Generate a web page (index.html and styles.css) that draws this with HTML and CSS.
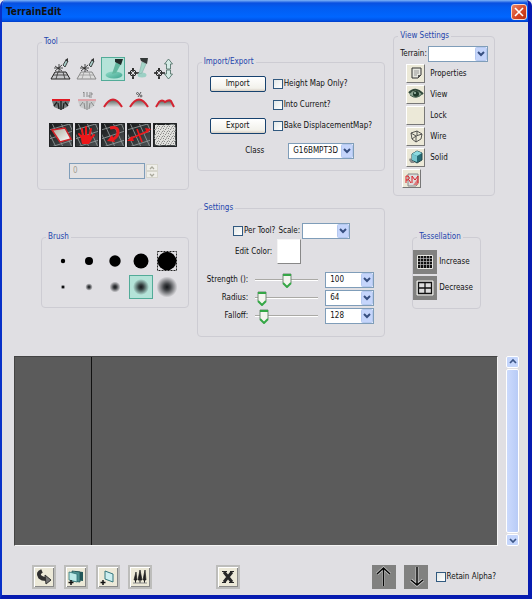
FILE: index.html
```html
<!DOCTYPE html>
<html lang="en">
<head>
<meta charset="utf-8">
<title>TerrainEdit</title>
<link rel="stylesheet" href="styles.css">
</head>
<body>
<svg class="defs" aria-hidden="true">
  <defs>
    <radialGradient id="soft"><stop offset="0" stop-color="#15181b"/><stop offset=".3" stop-color="#15181b" stop-opacity=".8"/><stop offset="1" stop-color="#15181b" stop-opacity="0"/></radialGradient>
    <linearGradient id="teal" x1="0" y1="0" x2="1" y2="1"><stop offset="0" stop-color="#8fdcc8"/><stop offset="1" stop-color="#3fa48f"/></linearGradient>
    <linearGradient id="hill" x1="0" y1="0" x2="0" y2="1"><stop offset="0" stop-color="#555f58"/><stop offset="1" stop-color="#dcdde0"/></linearGradient>
    <linearGradient id="pane" x1="0" y1="0" x2="1" y2="1"><stop offset="0" stop-color="#aaa89a"/><stop offset="1" stop-color="#fff"/></linearGradient>
    <linearGradient id="floor" x1="0" y1="0" x2="1" y2="1"><stop offset="0" stop-color="#151617"/><stop offset="1" stop-color="#505557"/></linearGradient>
    <pattern id="noise" width="5" height="5" patternUnits="userSpaceOnUse"><rect width="5" height="5" fill="#e0e0dd"/><path d="M0 0h1v1H0zM2 1h1v1H2zM4 3h1v1H4zM1 3h1v1H1z" fill="#888"/><path d="M3 0h1v1H3zM0 2h1v1H0zM3 4h1v1H3z" fill="#b3b3b0"/></pattern>
    <g id="tiles"><rect width="24" height="24" fill="url(#floor)"/><path d="M0 7L24 0M0 16L24 8M2 24L24 17M3 0L14 24M12 0L23 24M0 10L7 24M20 0L24 9" stroke="#8f9596" stroke-width=".9" fill="none"/><path d="M.5 .5h23v23H.5z" stroke="#202224" fill="none"/></g>
    <g id="spray"><path d="M14 8l3-5 2 1-3 6z" fill="#a9ceca" stroke="#404443"/><path d="M16 3l3-2v4z" fill="#333"/><path d="M6 9l7 5M10 7v8M13 8l-7 6M5 11h9" stroke="#222" stroke-width=".8"/></g>
    <g id="cross"><circle cx="6" cy="16" r="3" fill="none" stroke="#222"/><path d="M6 11v4M6 17v5M1 16h4M7 16h5M5 12h2M5 21h2" stroke="#222" stroke-width="1.3"/></g>
  </defs>
</svg>
<main class="window">
  <header class="titlebar">
    <h1>TerrainEdit</h1>
    <button class="close" aria-label="Close"><svg viewBox="0 0 10 10" width="10" height="10"><path d="M1 1l8 8M9 1L1 9" stroke="#fff" stroke-width="1.6"/></svg></button>
  </header>

  <div class="panels">
    <div class="column column-left">
      <fieldset class="tool">
        <legend>Tool</legend>
        <div class="tool-grid">
          <button aria-label="Paint"><svg viewBox="0 0 24 24"><path d="M6 15h11l4 7H2z" fill="#c8c9cc" stroke="#222"/><path d="M4 18h15M9 15l-2 7M14 15l2 7" stroke="#333" stroke-width=".8"/><use href="#spray"/></svg></button>
          <button aria-label="Paint height"><svg viewBox="0 0 24 24"><path d="M6 15h11l4 7H2z" fill="#ddd" stroke="#888"/><path d="M4 18h15M9 15l-2 7M14 15l2 7" stroke="#999" stroke-width=".8"/><use href="#spray"/></svg></button>
          <button class="selected" aria-label="Smooth"><svg viewBox="0 0 24 24"><ellipse cx="13" cy="18" rx="8.500" ry="3.500" fill="url(#teal)"/><path d="M15 5l5 2-5 9-4 1z" fill="#62b79f"/><path d="M14 2h8l-2 6-6-3z" fill="#222c2a"/></svg></button>
          <button aria-label="Position smooth"><svg viewBox="0 0 24 24"><use href="#cross"/><ellipse cx="15" cy="18" rx="4.500" ry="2.500" fill="#9cd0c5"/><path d="M15 5l4 2-4 9-3 1z" fill="#a4d4c8" stroke="#88b5aa" stroke-width=".7"/><path d="M13 1h8l-1 6-6-3z" fill="#333838"/></svg></button>
          <button aria-label="Raise and lower"><svg viewBox="0 0 24 24"><use href="#cross"/><path d="M15.500 2l4 5h-2v5h-4V7h-2zM13.500 13h4v4h2l-4 5-4-5h2z" fill="#d5ebe6" stroke="#46685e" stroke-width=".8"/></svg></button>

          <button aria-label="Flatten"><svg viewBox="0 0 24 24"><path d="M3 11h18l-3 6-6 3-7-3z" fill="#74797a"/><path d="M12 11v9M8 12l-3 4M16 12l3 4M9 13l1 6M15 13l-1 6" stroke="#1d1f1e" stroke-width="1.300"/><path d="M3 10h18" stroke="#e01822" stroke-width="2"/></svg></button>
          <button aria-label="Flatten to height"><svg viewBox="0 0 24 24"><path d="M3 11h18l-3 6-6 3-7-3z" fill="#c8cacb"/><path d="M12 11v9M8 12l-3 4M16 12l3 4M9 13l1 6M15 13l-1 6" stroke="#888"/><path d="M3 10h18" stroke="#df6870"/><path d="M8 3l1-1v5M12 2v5M14 3h3v2h-3v2h3" fill="none" stroke="#777" stroke-width=".8"/></svg></button>
          <button aria-label="Hill"><svg viewBox="0 0 24 24"><path d="M3 17q9-15 18 0z" fill="url(#hill)"/><path d="M3 17q9-15 18 0" fill="none" stroke="#d42331" stroke-width="2"/></svg></button>
          <button aria-label="Hill percent"><svg viewBox="0 0 24 24"><path d="M3 17q9-15 18 0z" fill="url(#hill)"/><path d="M3 17q9-15 18 0" fill="none" stroke="#d42331" stroke-width="2"/><circle cx="10.500" cy="3.500" r="1" fill="none" stroke="#333" stroke-width=".7"/><circle cx="14" cy="6" r="1" fill="none" stroke="#333" stroke-width=".7"/><path d="M14 2l-3 5" stroke="#333" stroke-width=".8"/></svg></button>
          <button aria-label="Noise"><svg viewBox="0 0 24 24"><path d="M3 17l4-6q3-1 5 1 3-2 6-1l3 6z" fill="url(#hill)"/><path d="M3 17l3-5q3-3 6 0 4-3 6-1l3 6" fill="none" stroke="#d42331" stroke-width="2"/></svg></button>

          <button aria-label="Visibility"><svg viewBox="0 0 24 24"><use href="#tiles"/><path d="M3 7l13-2 6 11-11 3z" fill="url(#pane)" stroke="#d32128" stroke-width="1.500"/></svg></button>
          <button aria-label="Grab"><svg viewBox="0 0 24 24"><use href="#tiles"/><path d="M8 20l-1-5-3-4M8 14L7 6M11 13V4M14 14l2-8M15 16l4-4" fill="none" stroke="#ed1719" stroke-width="2" stroke-linecap="round"/><path d="M6 12h9l2 4-3 5H7z" fill="#ed1719"/></svg></button>
          <button aria-label="Rotate"><svg viewBox="0 0 24 24"><use href="#tiles"/><path d="M9 5q8-2 8 4 0 5-6 8" fill="none" stroke="#e81b1e" stroke-width="3"/><path d="M6 18l5-6 3 7z" fill="#ee191c"/></svg></button>
          <button aria-label="Stretch"><svg viewBox="0 0 24 24"><use href="#tiles"/><path d="M3 16L21 8M10 6l5 13" stroke="#ec171a" stroke-width="1.700"/><path d="M0 18l5-5 2 5zM24 6l-6-1 2 5z" fill="#ec171a"/></svg></button>
          <button aria-label="Texture"><svg viewBox="0 0 24 24"><use href="#tiles"/><path d="M2 2h20v20H2z" fill="url(#noise)"/></svg></button>
        </div>
        <div class="spinner">
          <input type="text" value="0" aria-label="Tool value" disabled>
          <span class="spin-buttons">
            <button aria-label="Increase value" disabled><svg viewBox="0 0 6 4"><path d="M1 3l2-2 2 2" fill="none" stroke="#aaa99c" stroke-width="1.300"/></svg></button>
            <button aria-label="Decrease value" disabled><svg viewBox="0 0 6 4"><path d="M1 1l2 2 2-2" fill="none" stroke="#aaa99c" stroke-width="1.300"/></svg></button>
          </span>
        </div>
      </fieldset>

      <fieldset class="brush">
        <legend>Brush</legend>
        <div class="brush-grid">
          <button aria-label="Hard brush 1"><svg viewBox="0 0 24 24"><circle cx="12" cy="12" r="2.200"/></svg></button>
          <button aria-label="Hard brush 2"><svg viewBox="0 0 24 24"><circle cx="12" cy="12" r="4"/></svg></button>
          <button aria-label="Hard brush 3"><svg viewBox="0 0 24 24"><circle cx="12" cy="12" r="5.700"/></svg></button>
          <button aria-label="Hard brush 4"><svg viewBox="0 0 24 24"><circle cx="12" cy="12" r="7.500"/></svg></button>
          <button aria-label="Hard brush 5"><svg viewBox="0 0 24 24"><path d="M2.500 2.500h19v19h-19z" fill="none" stroke="#222" stroke-dasharray="2 1"/><circle cx="12" cy="12" r="9.300"/></svg></button>
          <button aria-label="Soft brush 1"><svg viewBox="0 0 24 24"><circle cx="12" cy="12" r="2.500" fill="url(#soft)"/><circle cx="12" cy="12" r="1"/></svg></button>
          <button aria-label="Soft brush 2"><svg viewBox="0 0 24 24"><circle cx="12" cy="12" r="3.700" fill="url(#soft)"/></svg></button>
          <button aria-label="Soft brush 3"><svg viewBox="0 0 24 24"><circle cx="12" cy="12" r="5.500" fill="url(#soft)"/></svg></button>
          <button class="selected" aria-label="Soft brush 4"><svg viewBox="0 0 24 24"><circle cx="12" cy="12" r="8" fill="url(#soft)"/></svg></button>
          <button aria-label="Soft brush 5"><svg viewBox="0 0 24 24"><circle cx="12" cy="12" r="10.500" fill="url(#soft)"/></svg></button>
        </div>
      </fieldset>
    </div>

    <div class="column column-middle">
      <fieldset class="import-export">
        <legend>Import/Export</legend>
        <div class="ie-grid">
          <button class="push">Import</button>
          <label class="check"><input type="checkbox">Height Map Only?</label>
          <label class="check second"><input type="checkbox">Into Current?</label>
          <button class="push">Export</button>
          <label class="check"><input type="checkbox">Bake DisplacementMap?</label>
        </div>
        <div class="class-row">
          <label for="class">Class</label>
          <select id="class"><option>G16BMPT3D</option></select>
        </div>
      </fieldset>

      <fieldset class="settings">
        <legend>Settings</legend>
        <div class="scale-row">
          <label class="check"><input type="checkbox">Per Tool?</label>
          <label for="scale">Scale:</label>
          <select id="scale"><option></option></select>
        </div>
        <div class="color-row">
          <label for="color">Edit Color:</label>
          <button id="color" class="swatch"></button>
        </div>
        <div class="slider-grid">
          <label for="strength">Strength ():</label>
          <input id="strength" type="range" min="0" max="200" value="100">
          <select aria-label="Strength value"><option>100</option></select>
          <label for="radius">Radius:</label>
          <input id="radius" type="range" min="0" max="2048" value="64">
          <select aria-label="Radius value"><option>64</option></select>
          <label for="falloff">Falloff:</label>
          <input id="falloff" type="range" min="0" max="2048" value="128">
          <select aria-label="Falloff value"><option>128</option></select>
        </div>
      </fieldset>
    </div>

    <div class="column column-right">
      <fieldset class="view">
        <legend>View Settings</legend>
        <div class="terrain-row">
          <label for="terrain">Terrain:</label>
          <select id="terrain"><option></option></select>
        </div>
        <div class="view-list">
          <button id="v1" class="raised"><svg viewBox="0 0 16 16"><path d="M4 3h9v7l-3 3H4z" fill="#e6e6df" stroke="#333"/><path d="M6 6h5M6 8h5M6 10h3" stroke="#999"/><path d="M13 10h-3v3z" fill="#555"/></svg></button><label for="v1">Properties</label>
          <button id="v2" class="raised"><svg viewBox="0 0 16 16"><path d="M1 8q6-7 14 0-7 7-14 0z" fill="#8da493"/><path d="M1 7q6-7 14 1" fill="none" stroke="#30483a" stroke-width="2"/><circle cx="8" cy="8" r="3" fill="#203a2c"/><circle cx="7" cy="7" r="1" fill="#aac6b4"/><path d="M2 9q6 5 12-1" fill="none" stroke="#4a6555"/></svg></button><label for="v2">View</label>
          <button id="v3" class="raised"></button><label for="v3">Lock</label>
          <button id="v4" class="raised"><svg viewBox="0 0 16 16"><path d="M3 5l6-2 5 3-1 5-5 3-4-3zM3 5l5 3 6-2M8 8v6M9 3v4M4 11l4-3" fill="none" stroke="#444" stroke-width=".9"/></svg></button><label for="v4">Wire</label>
          <button id="v5" class="raised"><svg viewBox="0 0 16 16"><path d="M2 9l5 5H3l-2-3z" fill="#888"/><path d="M4 5l5-3 5 2v7l-5 3-5-3z" fill="#276b74" stroke="#274a50"/><path d="M4 5l5-3 5 2-5 3z" fill="#8edbe0"/><path d="M4 5l5 2v6l-5-2z" fill="#76c6ce"/></svg></button><label for="v5">Solid</label>
        </div>
        <button class="raised realtime" aria-label="Real-time preview"><svg viewBox="0 0 16 16"><path d="M4 3h10v10l-2 2H4z" fill="#ddd" stroke="#888"/><path d="M10 13l4-6v7H9z" fill="#d97a7c"/><path d="M2 12V5h2q3 2 0 4H2M5 9l2 3M8 12V5l3 4 3-4v7" fill="none" stroke="#db1d25"/></svg></button>
      </fieldset>

      <fieldset class="tessellation">
        <legend>Tessellation</legend>
        <div class="tess-list">
          <button id="t1" class="flat"><svg viewBox="0 0 24 24"><path d="M4.500 5.500h15v13h-15z" fill="#111" stroke="#e7e7e2"/><path d="M7.500 6v12M10.500 6v12M13.500 6v12M16.500 6v12M5 8.500h14M5 11.500h14M5 14.500h14" stroke="#bbb" stroke-width=".7"/></svg></button><label for="t1">Increase</label>
          <button id="t2" class="flat"><svg viewBox="0 0 24 24"><path d="M4 5h16v14H4z" fill="#ddd" stroke="#f0f0eb"/><path d="M5.500 6.500h13v11h-13zM12 6v12M5 12h14" fill="none" stroke="#111" stroke-width="1.300"/></svg></button><label for="t2">Decrease</label>
        </div>
      </fieldset>
    </div>
  </div>

  <div class="decks">
    <section class="canvas" aria-label="Deco layers"></section>
    <div class="scrollbar">
      <button aria-label="Scroll up"><svg viewBox="0 0 8 8"><path d="M1 5l3-3 3 3" fill="none" stroke="#3d5688" stroke-width="1.700"/></svg></button>
      <div class="thumb"></div>
      <button aria-label="Scroll down"><svg viewBox="0 0 8 8"><path d="M1 3l3 3 3-3" fill="none" stroke="#3d5688" stroke-width="1.700"/></svg></button>
    </div>
  </div>

  <footer class="toolbar">
    <button class="framed" aria-label="Convert"><svg viewBox="0 0 16 16"><path d="M6 2q-5 2-2 6 2 2 6 2" fill="none" stroke="#303030" stroke-width="4"/><path d="M9 6l6 5-5 4z" fill="#777" stroke="#333"/></svg></button>
    <button class="framed" aria-label="Add layers"><svg viewBox="0 0 16 16"><path d="M7 2l8 1v9l-8-1z" fill="#22585a"/><path d="M4 2l8 1v10l-8-1z" fill="#4f9290" stroke="#225456" stroke-width=".8"/><path d="M1 3l8 2v8l-8-2z" fill="#bceae7" stroke="#2e7276" stroke-width=".8"/><path d="M3 11v5M.500 13.500h5" stroke="#111" stroke-width="1.500"/></svg></button>
    <button class="framed" aria-label="Add layer"><svg viewBox="0 0 16 16"><path d="M5 2l8 3v8L5 10z" fill="#cceeef" stroke="#34777d"/><path d="M3 11v5M.500 13.500h5" stroke="#111" stroke-width="1.500"/></svg></button>
    <button class="framed" aria-label="Add decoration"><svg viewBox="0 0 16 16"><path d="M4 3l1 8H2zM8 1l2 10H6zM13 1l1 10h-3z" fill="#202020" stroke="#202020" stroke-width=".7"/><path d="M3.500 11v3M8 11v3M12.500 11v3" stroke="#222"/><path d="M1 14h14" stroke="#888"/></svg></button>
    <button class="framed delete" aria-label="Delete"><svg viewBox="0 0 16 16"><path d="M4 3l8 10M12 3L4 13" stroke="#272727" stroke-width="3"/><path d="M2 2.500h5M10 2.500h4M2 13.500h4M9 13.500h5" stroke="#272727"/></svg></button>
    <button class="flat move-up" aria-label="Move up"><svg viewBox="0 0 24 24"><path d="M11.500 21V3M5 9l6.500-6L18 9" fill="none" stroke="#ccc" stroke-width="3"/><path d="M11.500 21V3M5 9l6.500-6L18 9" fill="none" stroke="#050505" stroke-width="1.500"/></svg></button>
    <button class="flat" aria-label="Move down"><svg viewBox="0 0 24 24"><path d="M13 2v18M7 15l6 5 6-5" fill="none" stroke="#ccc" stroke-width="3"/><path d="M13 2v18M7 15l6 5 6-5" fill="none" stroke="#050505" stroke-width="1.500"/></svg></button>
    <label class="check"><input type="checkbox">Retain Alpha?</label>
  </footer>
</main>
</body>
</html>
```
FILE: styles.css
```css
* { box-sizing: border-box; }

body {
  margin: 0;
  background: #e9ebf4;
  color: #111;
  font: 8px/10px "DejaVu Sans Condensed", "DejaVu Sans", sans-serif;
}

button, input, select { font: inherit; color: inherit; margin: 0; padding: 0; }
button { border: 0; background: none; }
svg { display: block; }
fieldset { min-width: 0; margin: 0; padding: 0; border: 1px solid #cdccd3; border-radius: 4px; }
legend { margin-left: 4px; padding: 0 2px; color: #2345ad; line-height: 12px; }
.defs { position: absolute; width: 0; height: 0; }

.window {
  display: flex;
  flex-direction: column;
  min-height: 100vh;
  border: solid #0830c8;
  border-width: 0 4px 4px 2px;
  border-right-color: #061bb0;
  border-bottom-color: #061bb0;
  border-radius: 6px 6px 0 0;
  background: #e0dfe3;
  overflow: hidden;
}

.titlebar {
  display: flex;
  align-items: center;
  justify-content: space-between;
  height: 22px;
  padding: 2px 1px 0 4px;
  background: linear-gradient(#7eb4f8 0, #0950e0 3px, #025cf0 7px, #0066ff 17px, #0055ea 20px, #003cc8 22px);
}
.titlebar h1 { margin: 0; font-size: 10px; line-height: 14px; }
.close {
  display: grid;
  place-items: center;
  width: 16px;
  height: 16px;
  border: 1px solid #f4d7d0;
  border-radius: 3px;
  background: linear-gradient(135deg, #e98364, #d54422 60%, #b93010);
}

.panels {
  display: grid;
  grid-template-columns: 152fr 189fr 102fr;
  gap: 8px;
  padding: 8px 33px 0 35px;
}
.column { display: flex; flex-direction: column; }
.column-left { padding-top: 6px; gap: 41px; }
.column-middle { padding-top: 26px; gap: 31px; }
.column-right { gap: 35px; }
.brush { margin-left: 4px; }
.tessellation { margin: 0 14px 0 19px; }

/* Tool and brush palettes */
.tool-grid, .brush-grid { display: grid; grid-template-columns: repeat(5, 24px); justify-content: center; column-gap: 2px; }
.tool-grid { row-gap: 9px; padding-top: 9px; }
.brush-grid { row-gap: 2px; padding: 6px 0 8px; }
.tool-grid svg, .brush-grid svg { width: 100%; height: 100%; }
.tool-grid button, .brush-grid button { width: 24px; height: 24px; }
.selected { background: #b4e3d8; outline: 1px solid #52ab98; outline-offset: -1px; }
.spinner { display: flex; width: 90px; height: 16px; margin: 16px auto 10px 31px; }
.spinner input { flex: 1; min-width: 0; padding-left: 3px; border: 1px solid #7f9db9; background: #e3e2e4; color: #a39f92; }
.spin-buttons { display: grid; width: 14px; padding: 1px; }
.spin-buttons button { display: grid; place-items: center; border: 1px solid #d7d6cd; background: #efeee9; }
.spin-buttons svg { width: 6px; height: 4px; }

/* Shared controls */
.check { display: flex; align-items: center; gap: 1px; white-space: nowrap; }
.check input { appearance: none; width: 10px; height: 10px; border: 1px solid #31597f; background: linear-gradient(135deg, #e3e8e8, #fff); }
.push {
  height: 16px;
  border: 1px solid #17426f;
  border-radius: 2px;
  background: linear-gradient(#fff, #f2f1eb 80%, #d8d0c5);
}
select {
  appearance: none;
  height: 16px;
  padding: 0 14px 0 4px;
  border: 1px solid #7f9db9;
  border-radius: 0;
  background: #fff url("data:image/svg+xml,%3Csvg xmlns='http://www.w3.org/2000/svg' width='12' height='14'%3E%3Crect x='.5' y='.5' width='11' height='13' rx='1' fill='%23c5d5fb' stroke='%23b5c8ef'/%3E%3Cpath d='M3 5l3 3 3-3' fill='none' stroke='%23374f80' stroke-width='2'/%3E%3C/svg%3E") right center no-repeat;
}

.ie-grid {
  display: grid;
  grid-template-columns: 56px auto;
  grid-auto-rows: 16px;
  gap: 5px 7px;
  padding: 8px 8px 0 12px;
}
.second { grid-column: 2; }
.class-row { display: flex; align-items: center; justify-content: flex-end; gap: 24px; padding: 9px 30px 11px 0; }
.class-row select { width: 66px; }

.scale-row { display: flex; align-items: center; justify-content: flex-end; gap: 3px; padding: 9px 34px 0 0; }
.scale-row select { width: 48px; margin-left: -1px; }
.color-row { display: flex; align-items: center; justify-content: flex-end; gap: 5px; padding-right: 83px; }
.swatch { width: 24px; height: 25px; border: 1px solid; border-color: #f4f4f4 #888 #888 #f4f4f4; background: #fff; }
.slider-grid {
  display: grid;
  grid-template-columns: 1fr 63px 49px;
  align-items: center;
  gap: 2px 7px;
  padding: 8px 10px 12px 0;
}
.slider-grid label { text-align: right; white-space: nowrap; }
input[type="range"] {
  appearance: none;
  width: 100%;
  height: 16px;
  background: linear-gradient(#aaa9a5, #aaa9a5 1px, #fff 1px) center / 100% 2px no-repeat;
}
input[type="range"]::-webkit-slider-thumb {
  appearance: none;
  width: 10px;
  height: 15px;
  background: url("data:image/svg+xml,%3Csvg xmlns='http://www.w3.org/2000/svg' width='10' height='15'%3E%3Cpath d='M1 1h8v9l-4 4-4-4z' fill='%23f4f5ef' stroke='%23708a74'/%3E%3Cpath d='M1 2h8M1 10l4 4 4-4' fill='none' stroke='%2335a746' stroke-width='2'/%3E%3C/svg%3E");
}

.terrain-row { display: flex; align-items: center; gap: 1px; padding: 4px 6px 0; }
.terrain-row select { flex: 1; min-width: 0; }
.view-list { display: grid; grid-template-columns: 20px auto; grid-auto-rows: 20px; align-items: center; gap: 1px 4px; padding: 1px 0 0 12px; }
.view-list label { line-height: 12px; padding-top: 1px; }
.raised {
  display: grid;
  place-items: center;
  width: 19px;
  height: 19px;
  border: 1px solid;
  border-color: #fff #777 #777 #fff;
  background: #ece9d8;
}
.raised svg { width: 16px; height: 16px; }
.realtime { margin: 2px 0 7px 8px; }

.tess-list { display: grid; grid-template-columns: 24px auto; align-items: center; gap: 2px; padding: 7px 0 8px; }
.flat { width: 24px; height: 24px; background: #818180; }
.flat svg { width: 24px; height: 24px; }

/* Layer area */
.decks { display: flex; flex: 1; gap: 8px; margin-top: 19px; padding: 0 9px 0 12px; }
.canvas {
  flex: 1;
  border: 1px solid;
  border-color: #444 #f5f5f5 #f5f5f5 #444;
  background: linear-gradient(#111, #111) 76px 0 / 1px 100% no-repeat #5b5b5b;
}
.scrollbar { display: flex; flex-direction: column; gap: 1px; width: 13px; }
.scrollbar button { display: grid; place-items: center; height: 12px; border: 1px solid #fff; border-radius: 2px; background: #c5d6fc; }
.scrollbar svg { width: 8px; height: 8px; }
.thumb { flex: 1; border: 1px solid #fff; border-radius: 2px; background: linear-gradient(90deg, #cbdafd, #b8cbf6); }

.toolbar { display: flex; align-items: center; gap: 8px; padding: 19px 32px 6px 30px; }
.framed { display: grid; place-items: center; width: 24px; height: 24px; border: 2px solid #bdbdbb; background: #ece9d8; box-shadow: inset 1px 1px #fff, inset -1px -1px #888; }
.framed svg { width: 16px; height: 16px; }
.delete { margin-left: 56px; }
.move-up { margin-left: auto; }
```
